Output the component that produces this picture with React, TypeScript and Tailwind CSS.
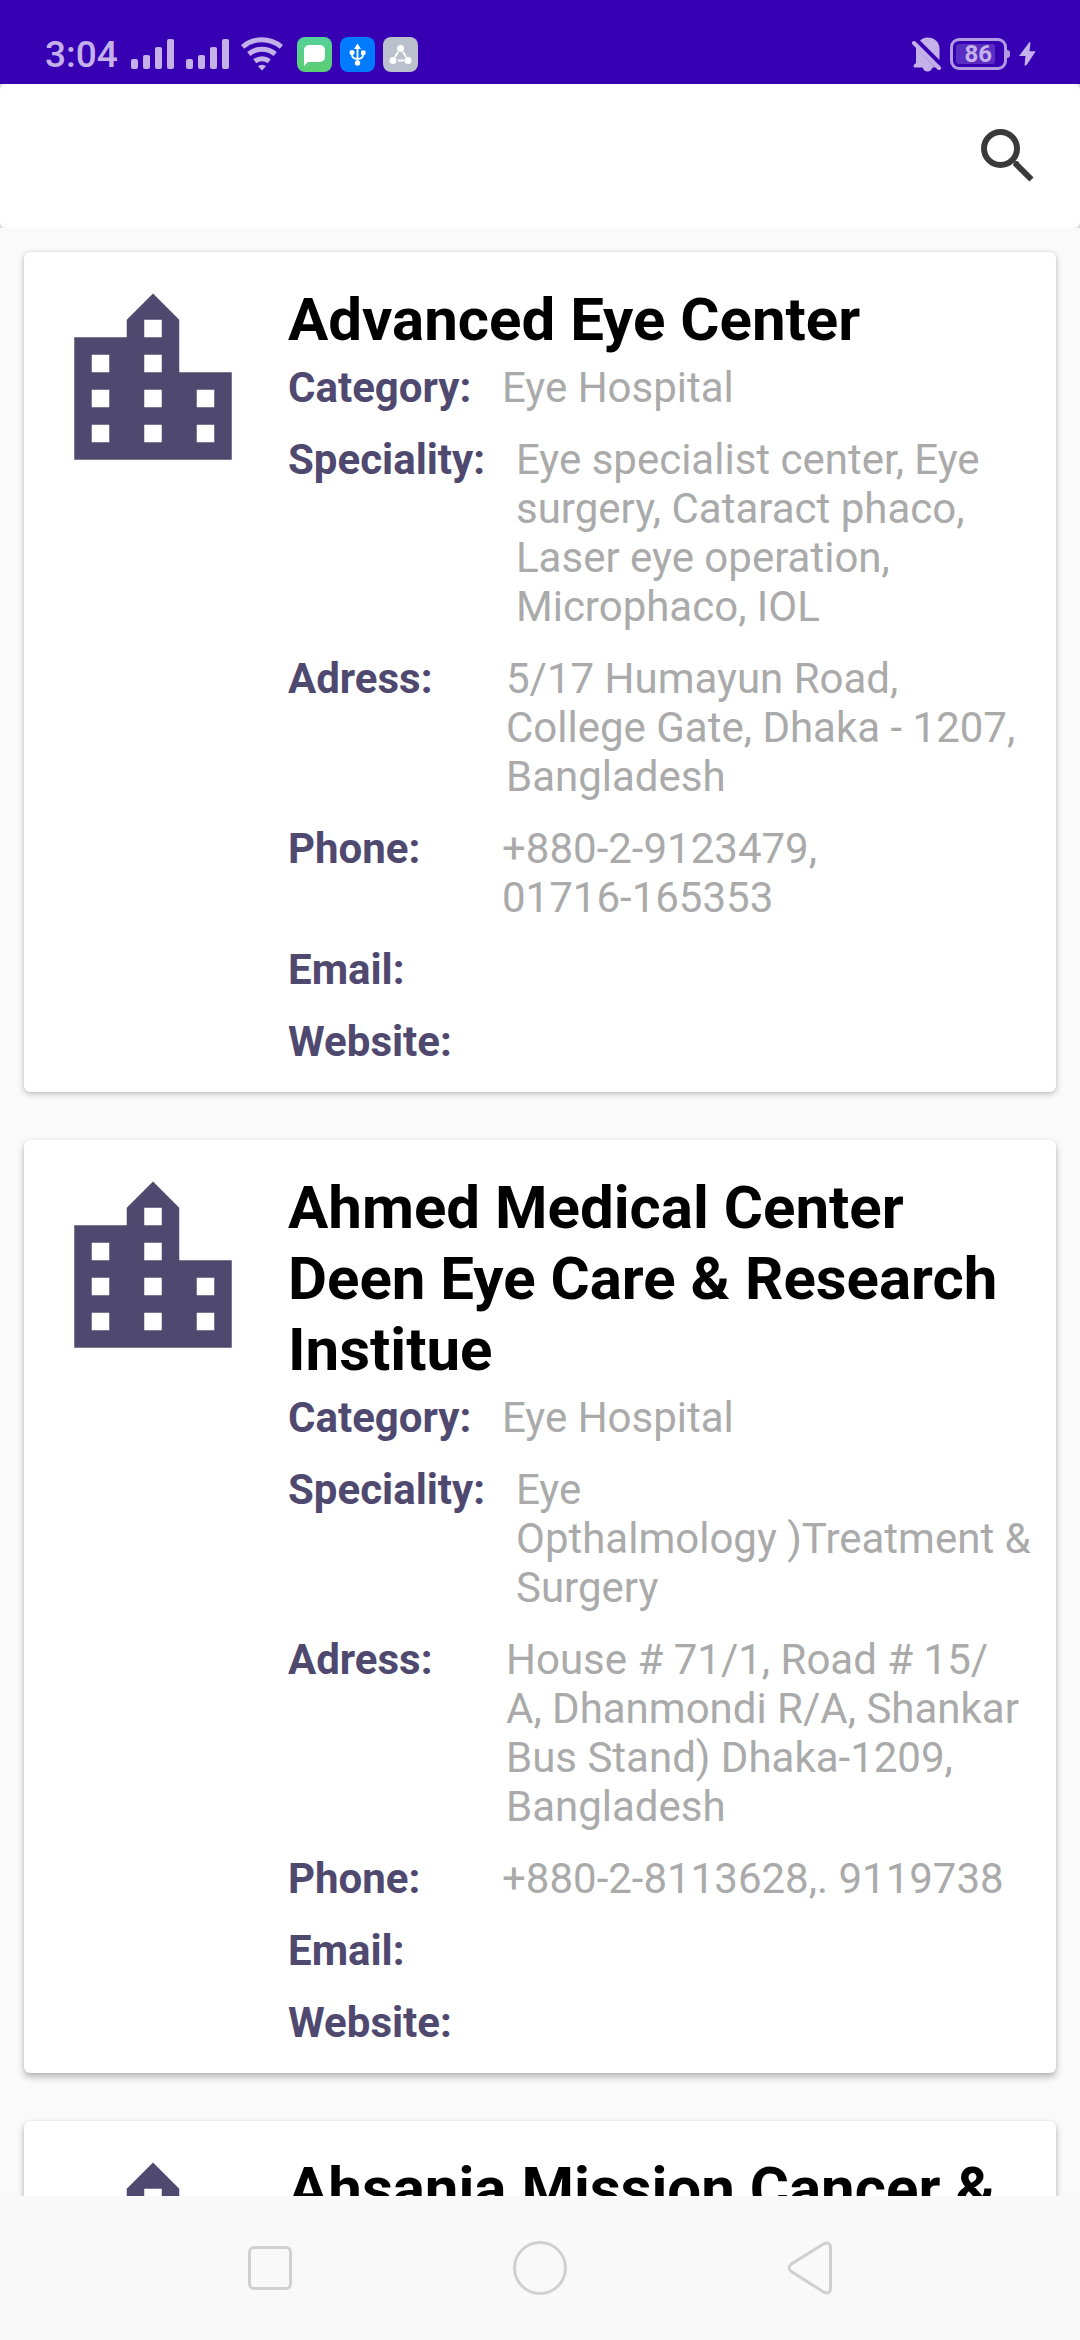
import React from "react";

type Hospital = {
  name: string;
  category?: string;
  speciality?: string;
  address?: string;
  phone?: string;
  partial?: boolean;
  shadow: string;
};

const hospitals: Hospital[] = [
  {
    name: "Advanced Eye Center",
    category: "Eye Hospital",
    speciality: "Eye specialist center, Eye surgery, Cataract phaco, Laser eye operation, Microphaco, IOL",
    address: "5/17 Humayun Road, College Gate, Dhaka - 1207, Bangladesh",
    phone: "+880-2-9123479,\n01716-165353",
    shadow: "shadow-[0_2px_6px_rgba(0,0,0,0.24),0_0_2px_rgba(0,0,0,0.12)]",
  },
  {
    name: "Ahmed Medical Center Deen Eye Care & Research Institue",
    category: "Eye Hospital",
    speciality: "Eye Opthalmology\u00a0)Treatment\u00a0& Surgery",
    address: "House # 71/1, Road # 15/\nA, Dhanmondi R/A, Shankar Bus Stand) Dhaka-1209, Bangladesh",
    phone: "+880-2-8113628,. 9119738",
    shadow: "shadow-[0_4px_7px_rgba(0,0,0,0.28),0_0_2px_rgba(0,0,0,0.1)]",
  },
  {
    name: "Ahsania Mission Cancer &",
    partial: true,
    shadow: "shadow-[0_4px_7px_rgba(0,0,0,0.28),0_0_2px_rgba(0,0,0,0.1)]",
  },
];

function SignalIcon() {
  return (
    <svg width="43" height="30" viewBox="0 0 43 30" fill="currentColor" aria-hidden="true">
      <rect x="0" y="20" width="7" height="10" rx="2" />
      <rect x="12" y="16" width="7" height="14" rx="2" />
      <rect x="24" y="8" width="7" height="22" rx="2" />
      <rect x="36" y="0" width="7" height="30" rx="2" />
    </svg>
  );
}

function WifiIcon() {
  return (
    <svg width="42" height="34" viewBox="0 0 42 34" fill="none" stroke="currentColor" strokeWidth="5" aria-hidden="true">
      <path d="M1.6 9.8A30 30 0 0 1 40.4 9.8" />
      <path d="M7.8 17A20.5 20.5 0 0 1 34.2 17" />
      <path d="M13.8 24.2A11.5 11.5 0 0 1 28.2 24.2" />
      <path d="M21 33.5l-4-4.2a6 6 0 0 1 8 0z" fill="currentColor" stroke="none" />
    </svg>
  );
}

function MessageBadge() {
  return (
    <svg width="35" height="35" viewBox="0 0 35 35" aria-hidden="true">
      <defs>
        <linearGradient id="message-green" x1="0" y1="0" x2="0" y2="1">
          <stop offset="0" stopColor="#55d19a" />
          <stop offset="1" stopColor="#5bcd72" />
        </linearGradient>
      </defs>
      <rect width="35" height="35" rx="8" fill="url(#message-green)" />
      <path d="M12 8h11a5 5 0 0 1 5 5v7a5 5 0 0 1-5 5H11l-4 4V13a5 5 0 0 1 5-5z" fill="#fff" />
    </svg>
  );
}

function UsbBadge() {
  return (
    <svg width="35" height="35" viewBox="0 0 35 35" aria-hidden="true">
      <rect width="35" height="35" rx="8" fill="#007bff" />
      <path d="M17.5 9v17M12 16v1.500q0 4.500 5.500 4.500t5.500-4.500V16" fill="none" stroke="#fff" strokeWidth="1.8" />
      <path d="M17.500 6.500l3.500 5.500h-7z" fill="#fff" />
      <circle cx="17.500" cy="26" r="2.700" fill="#fff" />
      <circle cx="12" cy="15.500" r="2.500" fill="#fff" />
      <rect x="21" y="13.500" width="4.500" height="4.500" rx="1" fill="#fff" />
    </svg>
  );
}

function ShareBadge() {
  return (
    <svg width="35" height="35" viewBox="0 0 35 35" aria-hidden="true">
      <rect width="35" height="35" rx="8" fill="#bac1cc" />
      <g stroke="#fff" strokeWidth="2">
        <path d="M15 15l-3 5M20 15l3 5M15 23.500h6" />
      </g>
      <circle cx="17.500" cy="11.500" r="3.500" fill="#fff" />
      <circle cx="10" cy="23.500" r="3.500" fill="#fff" />
      <circle cx="25" cy="23.500" r="3.500" fill="#fff" />
    </svg>
  );
}

function BellOffIcon() {
  return (
    <svg width="29" height="35" viewBox="0 0 29 35" fill="currentColor" aria-hidden="true">
      <path d="M8 3.500C10 1.500 12.500 0.500 15.500 0.500C22.500 0.500 27.500 5 27.500 12V23z" />
      <path d="M4 10.500L23.500 30.500H20.500C19.500 33 18 34.500 15.500 34.500S11.500 33 10.500 30.500H3C1.500 30.500 1 28 2.500 27.200L4 26z" />
      <path d="M2 6L27 31" stroke="currentColor" strokeWidth="4" strokeLinecap="round" />
    </svg>
  );
}

function Battery() {
  return (
    <div className="flex items-center">
      <div className="flex h-8 w-[57px] items-center rounded-[9px] border-3 border-[#b29be2] px-[3px]">
        <div className="flex h-5 w-[39px] items-center justify-end rounded-[3px] bg-[#5a2dc2] pr-[3px] text-[24px] leading-none font-bold">
          86
        </div>
      </div>
      <div className="h-2 w-[3px] rounded-r-full bg-[#b29be2]" />
    </div>
  );
}

function BoltIcon() {
  return (
    <svg width="17" height="24" viewBox="0 0 17 24" fill="currentColor" aria-hidden="true">
      <path d="M10.500 0L0 14h6.500L5.500 23.500q1.500 0.300 2.500-1L16.700 9.200H10.500L11.500 0.800z" />
    </svg>
  );
}

function StatusBar() {
  return (
    <div className="flex h-[84px] shrink-0 items-end justify-between bg-[#3700b3] pr-11 pl-[45px] text-[#c5b1ea]">
      <div className="flex h-[60px] items-center">
        <span className="text-[37px] leading-[37px] font-medium">3:04</span>
        <div className="ml-[13px] flex gap-3">
          <SignalIcon />
          <SignalIcon />
        </div>
        <div className="ml-3">
          <WifiIcon />
        </div>
        <div className="ml-[14px] flex gap-2">
          <MessageBadge />
          <UsbBadge />
          <ShareBadge />
        </div>
      </div>
      <div className="flex h-[60px] items-center gap-[9px]">
        <BellOffIcon />
        <Battery />
        <BoltIcon />
      </div>
    </div>
  );
}

function Toolbar() {
  return (
    <header className="shrink-0 bg-[#dcdcdc]">
      <div className="flex h-36 items-center justify-end rounded-[6px] bg-white pr-9">
        <button type="button" aria-label="Search" className="p-2 text-[#3a3a3a]">
          <svg width="58" height="58" viewBox="0 0 58 58" fill="none" stroke="currentColor" aria-hidden="true">
            <circle cx="22.500" cy="21.500" r="16.500" strokeWidth="6" />
            <path d="M37 36L53.500 52.500" strokeWidth="6" />
            <circle cx="38.300" cy="36.800" r="2.800" fill="currentColor" stroke="none" />
          </svg>
        </button>
      </div>
    </header>
  );
}

function BuildingIcon() {
  return (
    <svg className="mt-6 h-[210px] w-[210px] shrink-0" viewBox="0 0 24 24" fill="#4f4970" aria-hidden="true">
      <path d="M15 11V5l-3-3-3 3v2H3v14h18V11h-6zm-8 8H5v-2h2v2zm0-4H5v-2h2v2zm0-4H5V9h2v2zm6 8h-2v-2h2v2zm0-4h-2v-2h2v2zm0-4h-2V9h2v2zm0-4h-2V5h2v2zm6 12h-2v-2h2v2zm0-4h-2v-2h2v2z" />
    </svg>
  );
}

function Field({ label, value, width }: { label: string; value?: string; width: string }) {
  return (
    <div className="flex">
      <dt className={`shrink-0 font-bold text-[#4f4970] ${width}`}>{label}</dt>
      <dd className="min-w-0 flex-1 whitespace-pre-line text-[#aaaaaa]">{value}</dd>
    </div>
  );
}

function HospitalCard({ hospital }: { hospital: Hospital }) {
  return (
    <article className={`flex shrink-0 items-start gap-[30px] rounded-[6px] bg-white pr-5 pl-6 ${hospital.shadow}`}>
      <BuildingIcon />
      <div className="min-w-0 flex-1 pt-8 pb-[26px]">
        <h2 className="text-[60px] leading-[71px] font-bold text-black">{hospital.name}</h2>
        {!hospital.partial && (
          <dl className="mt-2 flex flex-col gap-[23px] text-[42px] leading-[49px]">
            <Field label="Category:" value={hospital.category} width="w-[214px]" />
            <Field label="Speciality:" value={hospital.speciality} width="w-[228px]" />
            <Field label="Adress:" value={hospital.address} width="w-[218px]" />
            <Field label="Phone:" value={hospital.phone} width="w-[214px]" />
            <Field label="Email:" width="w-[214px]" />
            <Field label="Website:" width="w-[214px]" />
          </dl>
        )}
      </div>
    </article>
  );
}

function NavigationBar() {
  return (
    <nav className="grid h-36 shrink-0 grid-cols-3 items-center justify-items-center bg-[#f9f9f9] px-[12.5%]">
      <button type="button" aria-label="Recent apps" className="flex h-16 w-16 items-center justify-center">
        <span className="h-11 w-11 rounded-[6px] border-3 border-[#d0d0d0]" />
      </button>
      <button type="button" aria-label="Home" className="flex h-16 w-16 items-center justify-center">
        <span className="h-[54px] w-[54px] rounded-full border-3 border-[#d0d0d0]" />
      </button>
      <button type="button" aria-label="Back" className="flex h-16 w-16 items-center justify-center">
        <svg width="46" height="54" viewBox="0 0 46 54" fill="none" stroke="#d0d0d0" strokeWidth="3" aria-hidden="true">
          <path d="M36.500 3L4 23.200Q0.500 26.700 4 30.200L36.500 51Q43.500 54 43.500 47V7Q43.500 0 36.500 3z" />
        </svg>
      </button>
    </nav>
  );
}

export default function App() {
  return (
    <div className="flex h-screen flex-col overflow-hidden bg-[#fafafa] font-['Roboto',sans-serif]">
      <StatusBar />
      <Toolbar />
      <main className="flex min-h-0 flex-1 flex-col gap-12 overflow-hidden px-6 pt-6">
        {hospitals.map((hospital) => (
          <HospitalCard key={hospital.name} hospital={hospital} />
        ))}
      </main>
      <NavigationBar />
    </div>
  );
}
